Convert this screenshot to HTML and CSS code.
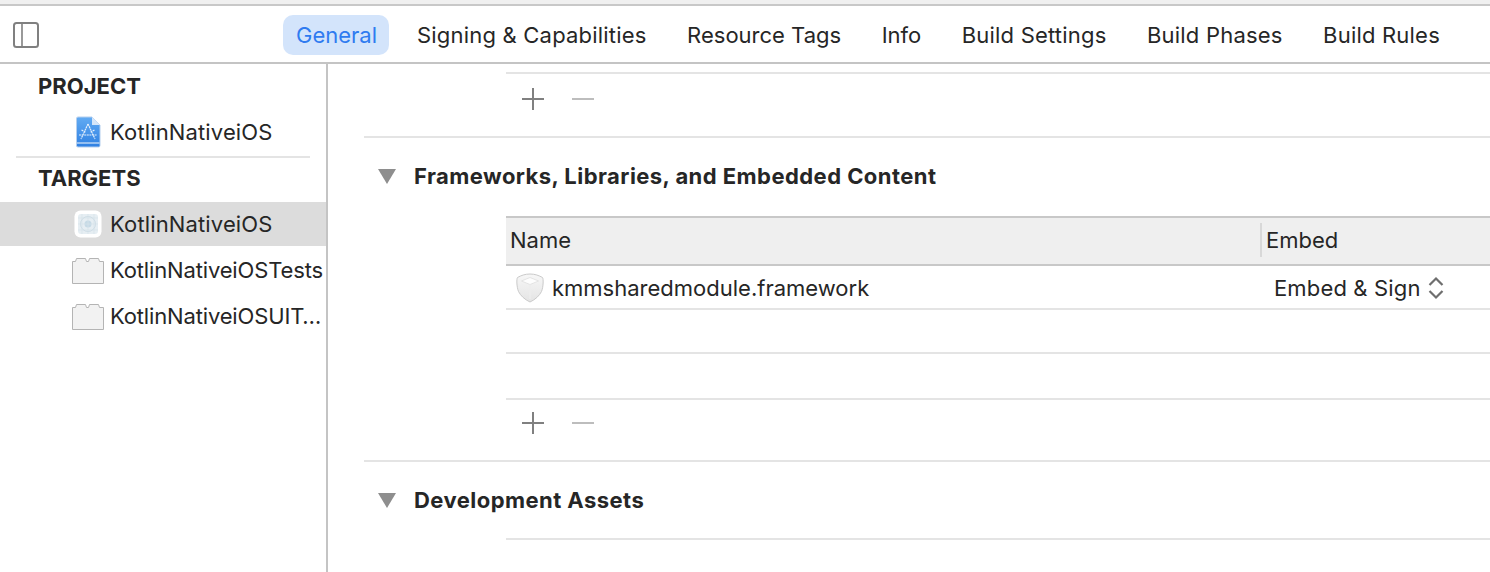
FILE: index.html
```html
<!DOCTYPE html>
<html lang="en">
<head>
    <meta charset="UTF-8">
    <title>KotlinNativeiOS - General</title>
    <link rel="stylesheet" href="styles.css">
</head>
<body>
    <div class="top-strip"></div>

    <header class="toolbar">
        <svg class="sidebar-toggle" width="26" height="26" viewBox="0 0 26 26">
            <rect x="1" y="1" width="24" height="24" rx="2.5" fill="none" stroke="#808080" stroke-width="2"/>
            <path d="M9 1v24" stroke="#808080" stroke-width="1.6"/>
        </svg>
        <nav class="tabs">
            <a class="tab active">General</a>
            <a class="tab wide">Signing &amp; Capabilities</a>
            <a class="tab">Resource Tags</a>
            <a class="tab">Info</a>
            <a class="tab wide">Build Settings</a>
            <a class="tab wide">Build Phases</a>
            <a class="tab wide">Build Rules</a>
        </nav>
    </header>

    <div class="main">
        <aside class="sidebar">
            <div class="side-group">
                <h3 class="side-title">PROJECT</h3>
                <div class="side-row">
                    <svg class="side-icon" width="32" height="32" viewBox="0 0 32 32">
                        <defs>
                            <linearGradient id="docBlue" x1="0" y1="0" x2="0" y2="1">
                                <stop offset="0" stop-color="#62abf3"/>
                                <stop offset="1" stop-color="#2f80e2"/>
                            </linearGradient>
                        </defs>
                        <path d="M6 1h14l8 8v20.500a1.500 1.500 0 0 1-1.500 1.500H6a1.500 1.500 0 0 1-1.500-1.500V2.500A1.500 1.500 0 0 1 6 1z" fill="url(#docBlue)" stroke="#b5cfee"/>
                        <path d="M20 1v8h8z" fill="#d5e6f9"/>
                        <path d="M5 27h22.500" stroke="#d5e6f9" stroke-width="1.200"/>
                        <path d="M16 8l-7 15M16 8l7 15M7 19h18M9.500 14l4 2M22.500 14l-4 2" stroke="#e3effc" stroke-width="1.200" stroke-dasharray="2 .6" fill="none"/>
                    </svg>
                    <span class="row-label">KotlinNativeiOS</span>
                </div>
            </div>
            <div class="side-group targets">
                <h3 class="side-title">TARGETS</h3>
                <div class="side-row selected">
                    <svg class="side-icon" width="28" height="28" viewBox="0 0 28 28">
                        <rect x="0.500" y="0.500" width="27" height="27" rx="6" fill="#fff"/>
                        <rect x="4" y="4" width="20" height="20" rx="3" fill="#e6eef3"/>
                        <circle cx="14" cy="14" r="7.500" fill="none" stroke="#cddce5"/>
                        <circle cx="14" cy="14" r="3.500" fill="#c6dae6"/>
                        <path d="M4 14h20M14 4v20M8 4v20M20 4v20M4 8h20M4 20h20" stroke="#d6e2e9" stroke-width="0.700"/>
                    </svg>
                    <span class="row-label">KotlinNativeiOS</span>
                </div>
                <div class="side-row first-plain">
                    <svg class="side-icon" width="32" height="28" viewBox="0 0 32 28">
                        <path d="M.5 27.500v-22h3l1-3h9l1 3h2l1-3h9l1 3h4v22z" fill="#f2f2f2" stroke="#b4b4b4"/>
                    </svg>
                    <span class="row-label tight">KotlinNativeiOSTests</span>
                </div>
                <div class="side-row">
                    <svg class="side-icon" width="32" height="28" viewBox="0 0 32 28">
                        <path d="M.5 27.500v-22h3l1-3h9l1 3h2l1-3h9l1 3h4v22z" fill="#f2f2f2" stroke="#b4b4b4"/>
                    </svg>
                    <span class="row-label tight">KotlinNativeiOSUIT…</span>
                </div>
            </div>
        </aside>

        <section class="content">
            <div class="indent-line"></div>
            <div class="add-remove">
                <svg width="24" height="24" viewBox="0 0 24 24"><path d="M12 1v22M1 12h22" stroke="#808080" stroke-width="2"/></svg>
                <svg width="24" height="24" viewBox="0 0 24 24"><path d="M1 12h22" stroke="#bdbdbd" stroke-width="2"/></svg>
            </div>

            <div class="section">
                <div class="section-head raised">
                    <span class="triangle"></span>
                    <h2>Frameworks, Libraries, and Embedded Content</h2>
                </div>
                <div class="table">
                    <div class="table-head">
                        <div class="cell-name">Name</div>
                        <div class="cell-embed">Embed</div>
                    </div>
                    <div class="table-row">
                        <div class="cell-name">
                            <svg width="30" height="30" viewBox="0 0 30 30">
                                <defs>
                                    <linearGradient id="shield" x1="0" y1="0" x2="0" y2="1">
                                        <stop offset="0" stop-color="#f7f7f7"/>
                                        <stop offset="1" stop-color="#e4e4e4"/>
                                    </linearGradient>
                                </defs>
                                <path d="M15 1c5 0 9 1.500 12.500 3.500 1 1 1 9-1 14-2 4-6 8-11.500 10.500C9.500 26.500 5.500 22.500 3.500 18.500c-2-5-2-13-1-14C6 2.500 10 1 15 1z" fill="url(#shield)" stroke="#cacaca"/>
                                <path d="M15 4.500l8.500 3.500-8.500 3.500L6.500 8z" fill="#fdfdfd" stroke="#dedede" stroke-width="0.800"/>
                                <path d="M15 11.500V26" stroke="#ececec" stroke-width="1.500"/>
                            </svg>
                            <span>kmmsharedmodule.framework</span>
                        </div>
                        <div class="cell-embed">
                            <span class="embed-value">Embed &amp; Sign</span>
                            <svg width="16" height="24" viewBox="0 0 16 24">
                                <path d="M1.500 9L8 2.500 14.500 9M1.500 15L8 21.500 14.500 15" fill="none" stroke="#6e6e6e" stroke-width="2.200"/>
                            </svg>
                        </div>
                    </div>
                    <div class="table-row"></div>
                    <div class="table-row last"></div>
                </div>
                <div class="add-remove below-table">
                    <svg width="24" height="24" viewBox="0 0 24 24"><path d="M12 1v22M1 12h22" stroke="#808080" stroke-width="2"/></svg>
                    <svg width="24" height="24" viewBox="0 0 24 24"><path d="M1 12h22" stroke="#bdbdbd" stroke-width="2"/></svg>
                </div>
            </div>

            <div class="section">
                <div class="section-head short">
                    <span class="triangle"></span>
                    <h2>Development Assets</h2>
                </div>
                <div class="indent-line"></div>
            </div>
        </section>
    </div>
</body>
</html>
```

FILE: styles.css
```css
* {
    margin: 0;
    padding: 0;
    box-sizing: border-box;
    font-family: Inter, 'Liberation Sans', sans-serif;
}

body {
    background: white;
    color: #262626;
    font-size: 22px;
    height: 572px;
    overflow: hidden;
}

.top-strip {
    height: 6px;
    background: #f0f0f0;
    border-bottom: 2px solid #c8c8c8;
}

.toolbar {
    height: 58px;
    display: flex;
    align-items: center;
    padding: 2px 0 0 13px;
    border-bottom: 2px solid #c4c4c4;
}

.tabs {
    display: flex;
    align-items: center;
    margin-left: 244px;
}

.tab {
    height: 40px;
    line-height: 40px;
    padding: 0 12px 0 13px;
    margin-right: 15.5px;
    border-radius: 10px;
}

.tab.wide {
    letter-spacing: 0.2px;
}

.tab.active {
    background: #d3e4fb;
    color: #2f7bf0;
    margin-right: 15px;
}

.main {
    display: flex;
    height: 508px;
}

.sidebar {
    width: 328px;
    flex-shrink: 0;
    border-right: 2px solid #c4c4c4;
}

.side-title {
    font-size: 22px;
    font-weight: 700;
    height: 45px;
    line-height: 44px;
    padding-left: 38px;
}

.targets {
    margin-top: 1px;
}

/* divider stops short of the sidebar edges */
.targets::before {
    content: "";
    display: block;
    height: 2px;
    margin: 0 16px;
    background: #e4e4e4;
}

.targets .side-title {
    height: 44px;
    line-height: 40px;
}

.side-row {
    height: 46px;
    display: flex;
    align-items: center;
    padding-left: 72px;
    white-space: nowrap;
}

.side-row.selected {
    background: #dcdcdc;
    height: 44px;
}

.side-row.first-plain {
    margin-top: 1px;
}

.side-icon {
    width: 32px;
    margin-right: 6px;
    flex-shrink: 0;
}

.row-label {
    letter-spacing: 0.14px;
}

.row-label.tight {
    letter-spacing: -0.15px;
}

.content {
    flex: 1;
    padding-left: 36px;
    padding-top: 8px;
    min-width: 0;
}

.indent-line {
    height: 2px;
    background: #e4e4e4;
    margin-left: 142px;
}

.add-remove {
    display: flex;
    gap: 26px;
    align-items: flex-start;
    height: 64px;
    padding: 13px 0 0 157px;
    border-bottom: 2px solid #e4e4e4;
}

.add-remove.below-table {
    height: 62px;
    padding-top: 11px;
}

.section-head {
    display: flex;
    align-items: center;
    height: 78px;
    padding-left: 14px;
}

.section-head.raised {
    padding-bottom: 2px;
}

.section-head.short {
    height: 76px;
}

.triangle {
    width: 0;
    height: 0;
    border-left: 9px solid transparent;
    border-right: 9px solid transparent;
    border-top: 15px solid #8e8e8e;
    margin-right: 18px;
}

.section-head h2 {
    font-size: 22px;
    font-weight: 700;
    letter-spacing: 0.45px;
}

.table {
    margin-left: 142px;
}

.table-head {
    height: 50px;
    display: flex;
    align-items: center;
    padding-bottom: 2px;
    background: #efefef;
    border-top: 2px solid #c8c8c8;
    border-bottom: 2px solid #c8c8c8;
}

.table-row {
    height: 44px;
    display: flex;
    align-items: center;
    padding-top: 2px;
    border-bottom: 2px solid #e4e4e4;
}

.table-row.last {
    height: 46px;
}

.cell-name {
    width: 754px;
    padding-left: 4px;
    display: flex;
    align-items: center;
    gap: 7px;
}

.table-head .cell-embed {
    border-left: 2px solid #d8d8d8;
    padding-left: 4px;
    height: 34px;
    line-height: 34px;
}

.table-row .cell-name {
    padding-left: 9px;
}

.table-row .cell-embed {
    display: flex;
    align-items: center;
    padding-left: 14px;
    gap: 7px;
    letter-spacing: 0.15px;
}
```
